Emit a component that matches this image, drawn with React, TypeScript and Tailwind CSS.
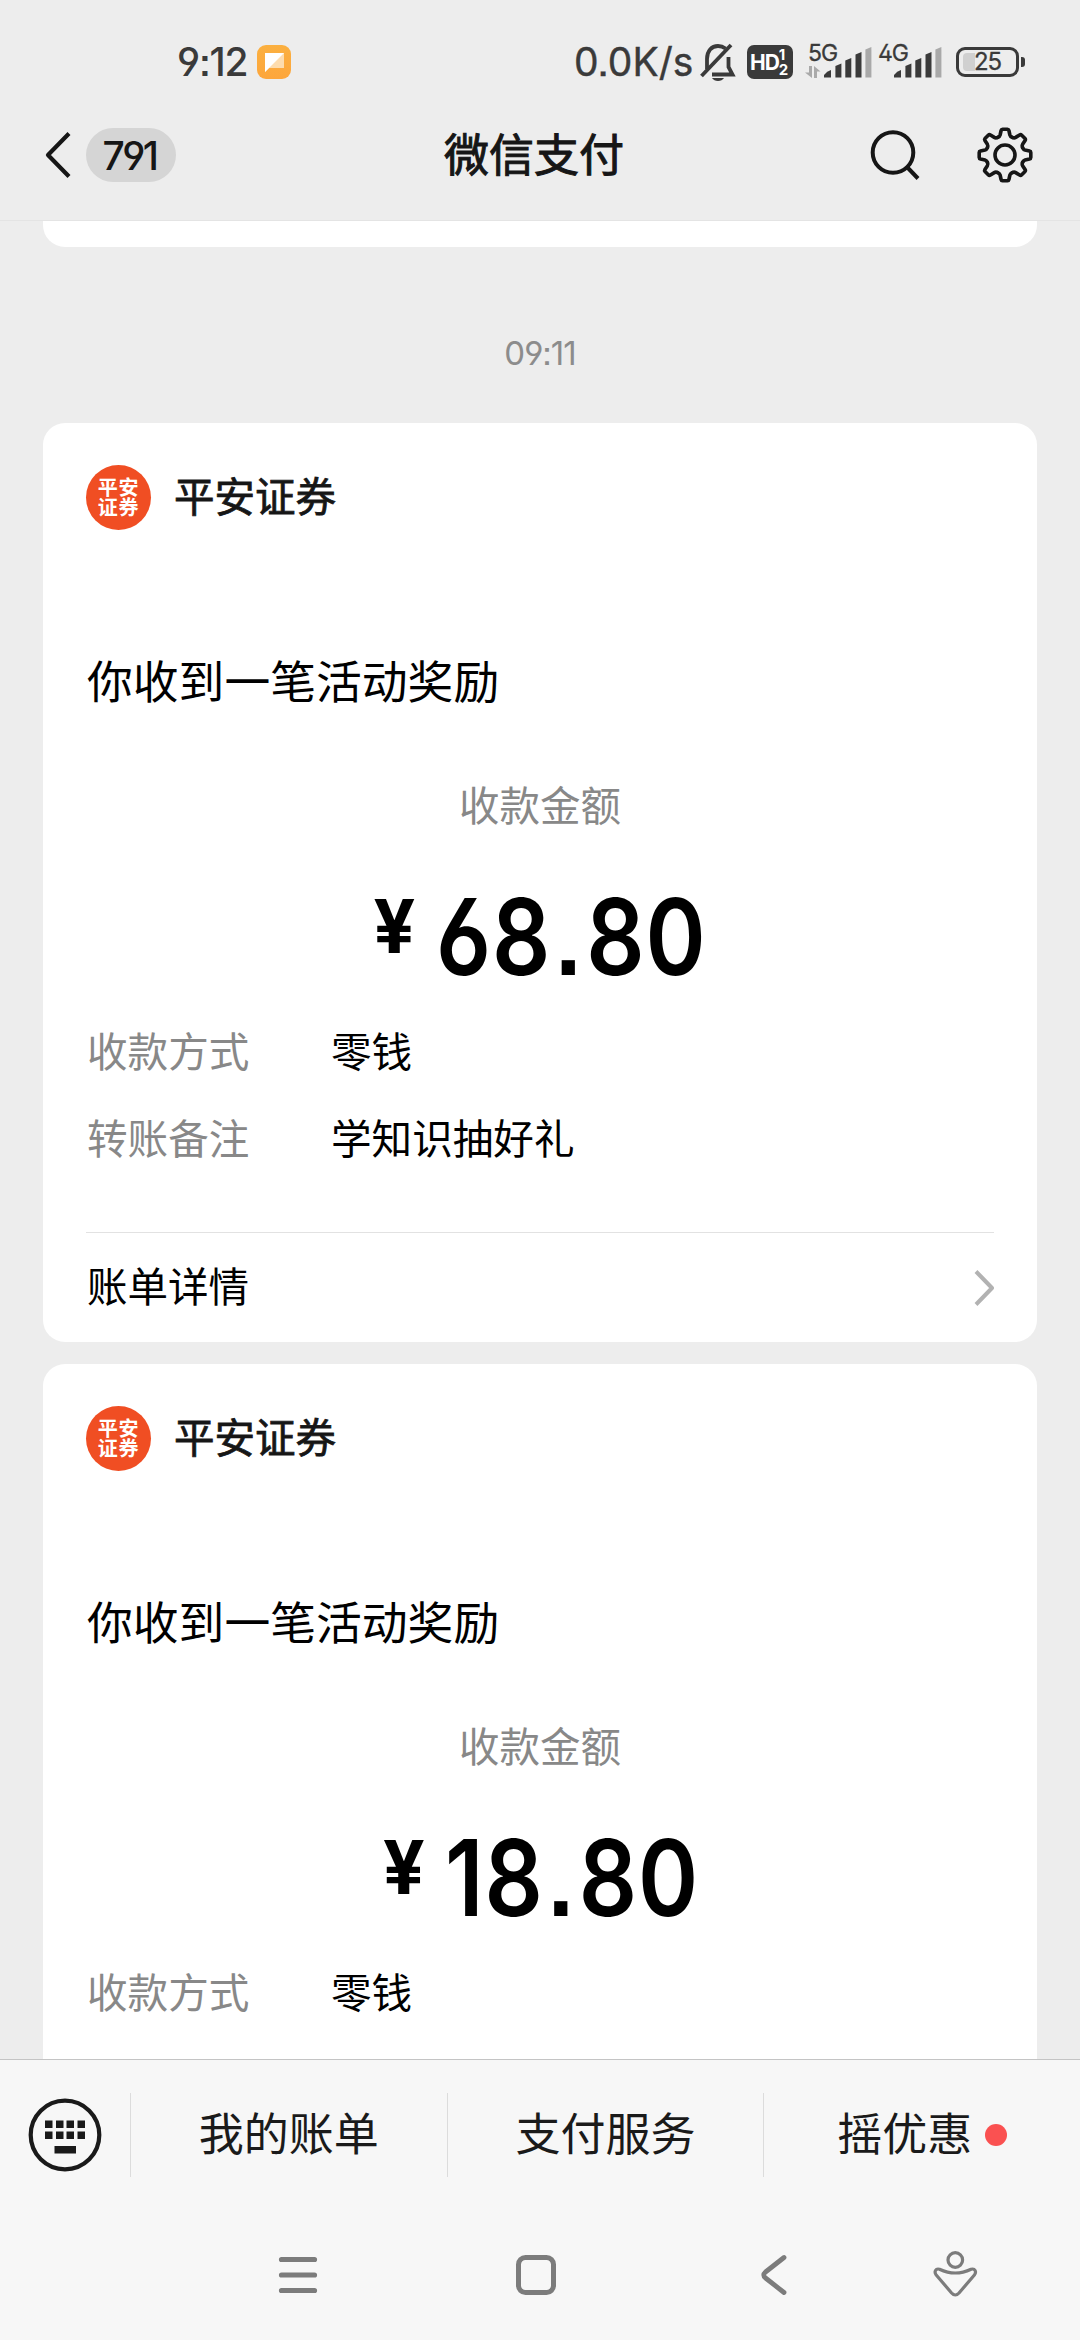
import React from 'react';

interface Row {
  label: string;
  value: string;
}

interface Payment {
  merchant: string;
  title: string;
  amount: string;
  rows: Row[];
  link?: string;
}

const PAYMENTS: Payment[] = [
  {
    merchant: '平安证券',
    title: '你收到一笔活动奖励',
    amount: '68.80',
    rows: [
      { label: '收款方式', value: '零钱' },
      { label: '转账备注', value: '学知识抽好礼' },
    ],
    link: '账单详情',
  },
  {
    merchant: '平安证券',
    title: '你收到一笔活动奖励',
    amount: '18.80',
    rows: [{ label: '收款方式', value: '零钱' }],
  },
];

const MENU = [
  { label: '我的账单', dot: false },
  { label: '支付服务', dot: false },
  { label: '摇优惠', dot: true },
];

const SignalBars: React.FC = () => (
  <svg width="48" height="31" viewBox="0 0 48 31" className="block">
    <path d="M0 30.5V28q3-4 7-5v7.500z" fill="#3a3a3a" />
    <path d="M11.400 30.500V19l6-2.500v14zM21.300 30.500V13.500l6-2.500v19.500zM31.500 30.500V7.500l6-2.500v25.500z" fill="#3a3a3a" />
    <path d="M41.400 30.500V2.500l6-2.500v30.500z" fill="#a9a9a9" />
  </svg>
);

const StatusBar: React.FC = () => (
  <div className="flex h-[90px] items-start pt-[44px] text-[#3a3a3a]">
    <span className="ml-[177px] w-[80px] whitespace-nowrap text-[39px] leading-[36px] font-medium tracking-[-1.2px]">9:12</span>
    <svg width="34" height="35" viewBox="0 0 34 35" className="mt-px">
      <defs>
        <linearGradient id="note" x1="0" y1="0" x2="0" y2="1">
          <stop offset="0" stopColor="#fbb040" />
          <stop offset="1" stopColor="#fda63c" />
        </linearGradient>
      </defs>
      <rect width="34" height="34" rx="9" fill="url(#note)" />
      <path d="M8 8h19v15H12l-4 4z" fill="#fddcae" />
      <path d="M8 8h19L8 27z" fill="#fff" />
    </svg>

    <span className="ml-[283px] w-[126px] whitespace-nowrap text-[39px] leading-[36px] [-webkit-text-stroke:0.4px]">0.0K/s</span>
    <svg width="36" height="38" viewBox="0 0 36 38" fill="none" stroke="#3a3a3a" strokeWidth="3.800" className="-mt-px">
      <path d="M31 2 1.500 33" />
      <path d="M7 26V16C7 8 11.500 3 18 3c3 0 5.500 1 7.500 2.500M28.500 14v10l4 7.500H12" />
      <path d="M12 35h12q-2 3-6 3t-6-3z" fill="#3a3a3a" stroke="none" />
    </svg>
    <div className="ml-[11px] mt-px flex h-[34px] w-[46px] items-center rounded-[7px] bg-[#3a3a3a] pl-[3px] text-white">
      <span className="text-[21px] leading-none font-bold tracking-[-1px]">HD</span>
      <span className="flex flex-col text-[15px] leading-[15px] font-bold">
        <span>1</span>
        <span>2</span>
      </span>
    </div>
    <div className="relative ml-[31px] mt-[3px]">
      <span className="absolute -left-[16px] -top-[5px] text-[23px] leading-[22px] tracking-[-1px] [-webkit-text-stroke:0.3px]">5G</span>
      <svg width="16" height="12" viewBox="0 0 16 12" className="absolute -left-[19px] top-[19px]" fill="#a9a9a9">
        <path d="M4 0h3v12L0 6.500h4zM9 12V0l6.500 5.500H12V12z" />
      </svg>
      <SignalBars />
    </div>
    <div className="relative ml-[22px] mt-[3px]">
      <span className="absolute -left-[16px] -top-[5px] text-[23px] leading-[22px] tracking-[-1px] [-webkit-text-stroke:0.3px]">4G</span>
      <SignalBars />
    </div>
    <div className="ml-[14px] mt-[3px] flex items-center">
      <div className="relative flex h-[30px] w-[63px] items-center justify-center rounded-[9px] border-3 border-[#3a3a3a]">
        <span className="absolute left-[4px] top-[3px] h-[18px] w-[12px] rounded-l-[4px] bg-[#d0d0d0]" />
        <span className="relative text-[24px] leading-none tracking-[-1px] [-webkit-text-stroke:0.3px]">25</span>
      </div>
      <span className="ml-[2px] h-[10px] w-[4px] rounded-r-[3px] bg-[#3a3a3a]" />
    </div>
  </div>
);

const GearIcon: React.FC = () => (
  <svg width="56" height="56" viewBox="-28 -28 56 56" fill="none" stroke="#161616" strokeWidth="3.600" strokeLinejoin="round" strokeLinecap="round">
    <circle r="10" />
    {/* one tooth, repeated around the hub */}
    {[0, 45, 90, 135, 180, 225, 270, 315].map((angle) => (
      <path
        key={angle}
        d="M-7.300-17.600Q-5.300-18.400-4.900-20L-3.900-24.500Q-3.600-25.800-2.500-25.800H2.500Q3.600-25.800 3.900-24.500L4.900-20Q5.300-18.400 7.300-17.600"
        transform={`rotate(${angle})`}
      />
    ))}
  </svg>
);

const TitleBar: React.FC = () => (
  <header className="flex h-[131px] items-center border-b border-[#e4e4e4] text-[#161616]">
    <div className="flex w-[374px] items-center pl-[45px]">
      <svg width="26" height="46" viewBox="0 0 26 46" fill="none" stroke="#161616" strokeWidth="4.200" strokeLinejoin="round">
        <path d="M24 1.500 3 23l21 21.500" />
      </svg>
      <span className="ml-[15px] flex h-[54px] w-[90px] items-center justify-center rounded-full bg-[#d5d5d5] pr-[3px] text-[39px] leading-none font-medium tracking-[-2.5px]">
        791
      </span>
    </div>
    <h1 className="w-[320px] text-center text-[45px] leading-none [-webkit-text-stroke:1px]">微信支付</h1>
    <div className="flex flex-1 items-center">
      <svg width="52" height="52" viewBox="0 0 52 52" fill="none" stroke="#161616" strokeWidth="4" className="ml-[175px]">
        <circle cx="24" cy="23.500" r="20.300" />
        <path d="m38 38 11 11.500" />
      </svg>
      <div className="ml-[56px]">
        <GearIcon />
      </div>
    </div>
  </header>
);

const Amount: React.FC<{ value: string }> = ({ value }) => {
  const [whole, cents] = value.split('.');
  return (
    <div className="mt-[53px] flex h-[110px] items-start justify-center">
      <span className="mt-[7px] font-[Roboto,sans-serif] text-[76px] leading-[76px] font-bold">¥</span>
      <span className="-mr-[44px] ml-[21px] origin-left scale-x-[0.86] text-[106px] leading-[110px] font-semibold tracking-[1px]">
        {whole}
        <span className="mx-[3px]">.</span>
        {cents}
      </span>
    </div>
  );
};

const PaymentCard: React.FC<{ payment: Payment }> = ({ payment }) => (
  <section className="h-[919px] w-[994px] shrink-0 rounded-[22px] bg-white px-[43px] text-black">
    <div className="flex items-center pt-[42px]">
      <div className="flex size-[65px] flex-col items-center justify-center rounded-full bg-[#f04e23] text-[20px] leading-[20px] font-bold tracking-[0.8px] text-white">
        <span>平安</span>
        <span>证券</span>
      </div>
      <span className="ml-[23px] mt-[2px] text-[40.500px] leading-none text-[#161616] [-webkit-text-stroke:0.8px]">{payment.merchant}</span>
    </div>

    <h2 className="mt-[128px] pl-px text-[45.800px] leading-[50px]">{payment.title}</h2>

    <p className="mt-[77px] text-center text-[40.500px] leading-[44px] text-[#888]">收款金额</p>
    <Amount value={payment.amount} />

    <dl className="mt-[39px] h-[174px]">
      {payment.rows.map((row) => (
        <div key={row.label} className="flex h-[87px] items-start text-[40.600px] leading-[44px]">
          <dt className="w-[245px] pl-px text-[#888]">{row.label}</dt>
          <dd>{row.value}</dd>
        </div>
      ))}
    </dl>

    {payment.link && (
      <div className="mt-[27px] flex h-[110px] items-center justify-between border-t border-[#e2e2e2]">
        <span className="pl-px text-[40.500px] leading-[44px]">{payment.link}</span>
        <svg width="20" height="36" viewBox="0 0 20 36" fill="none" stroke="#b2b2b2" strokeWidth="4" strokeLinejoin="round">
          <path d="M2 1.500 18 18 2 34.500" />
        </svg>
      </div>
    )}
  </section>
);

const KeyboardIcon: React.FC = () => (
  <svg width="74" height="74" viewBox="0 0 74 74">
    <circle cx="37" cy="37" r="34.300" fill="none" stroke="#1a1a1a" strokeWidth="4.200" />
    {[17, 28, 38.5, 49.5].map((x) => (
      <React.Fragment key={x}>
        <rect x={x} y="22.500" width="7.500" height="7.500" fill="#1a1a1a" />
        <rect x={x} y="33.500" width="7.500" height="7.500" fill="#1a1a1a" />
      </React.Fragment>
    ))}
    <rect x="26.500" y="48" width="21.500" height="7.500" fill="#1a1a1a" />
  </svg>
);

const MenuBar: React.FC = () => (
  <div className="flex h-[150px] items-center border-t border-[#c4c4c4] text-[#1a1a1a]">
    <div className="flex w-[130px] justify-center">
      <KeyboardIcon />
    </div>
    {MENU.map((item) => (
      <div key={item.label} className="flex h-[84px] flex-1 items-center justify-center border-l border-[#dcdcdc]">
        <span className="text-[45px] leading-none">{item.label}</span>
        {item.dot && <span className="ml-[13px] size-[22px] rounded-full bg-[#fa5151]" />}
      </div>
    ))}
  </div>
);

const NavBar: React.FC = () => (
  <div className="flex h-[131px] items-center text-[#7c7c7c]">
    <svg width="40" height="42" viewBox="0 0 40 42" fill="none" stroke="currentColor" strokeWidth="5.200" strokeLinecap="round" className="ml-[278px]">
      <path d="M3.500 5.500h33M3.500 21h33M3.500 36.500h33" />
    </svg>
    <svg width="42" height="42" viewBox="0 0 42 42" fill="none" stroke="currentColor" strokeWidth="5" className="ml-[197px]">
      <rect x="3.500" y="3.500" width="35" height="35" rx="7" />
    </svg>
    <svg width="28" height="42" viewBox="0 0 28 42" fill="none" stroke="currentColor" strokeWidth="4.800" strokeLinecap="round" strokeLinejoin="round" className="ml-[203px]">
      <path d="M24 3.500 5.500 18q-3.500 3 0 6L24 38.500" />
    </svg>
    <svg width="46" height="50" viewBox="0 0 46 50" fill="none" stroke="currentColor" strokeWidth="3.200" strokeLinejoin="round" className="ml-[144px]">
      <circle cx="23.300" cy="10" r="7.300" />
      <path d="M7.500 19.200q8 3.800 15.800 3.800t15.800-3.800c4-1 5.500 2.500 3.500 5.500L27 43q-3.700 4-7.400 0L4 24.700c-2-3-.5-6.500 3.500-5.500z" />
    </svg>
  </div>
);

export default function App() {
  return (
    <div className="flex h-[2340px] w-[1080px] flex-col overflow-hidden bg-[#ededed] font-[Inter,'Noto_Sans_CJK_SC',sans-serif] [font-feature-settings:'ss01','ss07']">
      <StatusBar />
      <TitleBar />
      <main className="flex min-h-0 flex-1 flex-col items-center overflow-hidden">
        <div className="-mt-px h-[27px] w-[994px] shrink-0 rounded-b-[22px] bg-white" />
        <p className="mt-[84px] text-[33px] leading-[44px] tracking-[-1px] text-[#8c8c8c]">09:11</p>
        <div className="mt-[48px] flex flex-col gap-[22px]">
          {PAYMENTS.map((payment) => (
            <PaymentCard key={payment.amount} payment={payment} />
          ))}
        </div>
      </main>
      <footer className="bg-[#f7f7f7]">
        <MenuBar />
        <NavBar />
      </footer>
    </div>
  );
}
